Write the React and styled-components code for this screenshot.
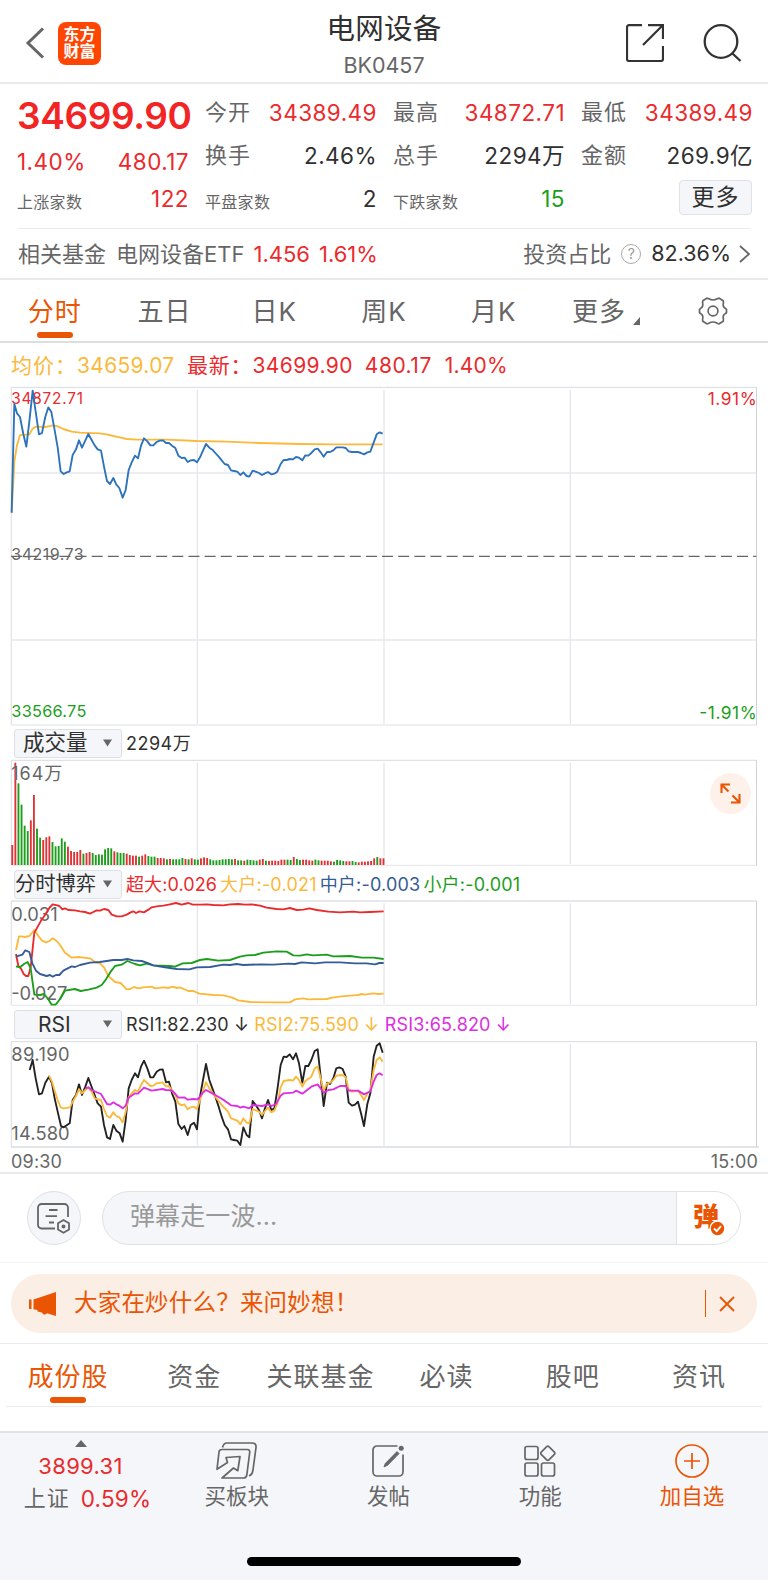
import React from "react";
import styled, { createGlobalStyle } from "styled-components";

const COLORS = {
  red: "#ea2a2c",
  green: "#1c9e1c",
  orange: "#ea5504",
  yellow: "#fbb93c",
  blue: "#2d72bc",
  navy: "#355b98",
  magenta: "#dc2fe0",
  dark: "#303030",
  grey: "#666666",
  line: "#e9eaec",
  panel: "#f5f6f9",
};

const GlobalStyle = createGlobalStyle`
  * {
    box-sizing: border-box;
  }
  body {
    margin: 0;
    background: #fff;
    color: ${COLORS.grey};
    font-family: Inter, "Noto Sans CJK SC", sans-serif;
    font-size: 22px;
    line-height: 1;
  }
  svg {
    display: block;
    flex: none;
  }
`;

const Page = styled.div`
  width: 768px;
  height: 1580px;
  display: flex;
  flex-direction: column;
  overflow: hidden;
`;

const Txt = styled.span`
  color: ${(p) => p.$color || "inherit"};
  font-size: ${(p) => p.$size || 22}px;
  font-weight: ${(p) => p.$weight || 400};
  letter-spacing: ${(p) => p.$gap || 0}px;
  margin-left: ${(p) => p.$ml || 0}px;
  line-height: 1.2;
  white-space: nowrap;
`;

/* ---------- header ---------- */

const Header = styled.header`
  height: 84px;
  display: grid;
  grid-template-columns: 1fr auto 1fr;
  align-items: center;
  border-bottom: 2px solid ${COLORS.line};
`;

const HeaderLeft = styled.div`
  display: flex;
  align-items: center;
  padding: 4px 0 0 25px;
`;

const Logo = styled.div`
  width: 43px;
  height: 43px;
  margin-left: 13px;
  padding-top: 4px;
  border-radius: 8px;
  background: #ff4502;
  color: #fff;
  font-size: 16px;
  font-weight: 700;
  line-height: 17.5px;
  text-align: center;
`;

const TitleBox = styled.div`
  display: flex;
  flex-direction: column;
  align-items: center;
  gap: 7px;
  padding-top: 9px;
`;

const HeaderRight = styled.div`
  display: flex;
  justify-content: flex-end;
  align-items: center;
  gap: 38px;
  padding: 4px 26px 0 0;
`;

/* ---------- quote ---------- */

const Quote = styled.section`
  height: 144px;
  display: grid;
  grid-template-columns: repeat(4, 171px);
  column-gap: 17px;
  padding-left: 17px;
`;

const QuoteCol = styled.div`
  display: grid;
  grid-template-columns: 171px;
  grid-template-rows: ${(p) => (p.$main ? "64px 27px 46px" : "56px 31px 55px")};
`;

const Pair = styled.div`
  display: flex;
  align-items: center;
  justify-content: space-between;
`;

const Num = styled(Txt)`
  font-size: 22.5px;
  letter-spacing: 0.45px;
  margin-right: -1px;
`;

const Small = styled.span`
  font-size: 16px;
  letter-spacing: 0.3px;
  padding-top: 7px;
`;

const MoreButton = styled.button`
  width: 73px;
  height: 35px;
  margin: 0 0 3px auto;
  padding: 0;
  border: 1px solid #dfe1e6;
  border-radius: 4px;
  background: ${COLORS.panel};
  color: ${COLORS.dark};
  font: inherit;
  font-size: 23px;
  letter-spacing: 1px;
`;

const FundRow = styled.section`
  height: 51px;
  display: flex;
  align-items: center;
  padding: 1px 18px 0;
  border-bottom: 2px solid ${COLORS.line};
`;

const Rule = styled.div`
  height: ${(p) => p.$h || 1}px;
  margin: 0 ${(p) => p.$inset || 0}px;
  background: ${(p) => p.$color || COLORS.line};
`;

const Spacer = styled.div`
  flex: 1;
`;

const Help = styled.span`
  width: 20px;
  height: 20px;
  margin: 0 10px;
  border: 1px solid #aaa;
  border-radius: 50%;
  color: #999;
  font-size: 14px;
  line-height: 18px;
  text-align: center;
`;

/* ---------- tabs ---------- */

const Tabs = styled.nav`
  height: ${(p) => p.$height}px;
  display: flex;
  padding: ${(p) => p.$pad || 0};
`;

const Tab = styled.div`
  flex: 1;
  display: flex;
  flex-direction: column;
  align-items: center;
  justify-content: flex-end;
  gap: 7px;
  padding-bottom: 3px;
  color: ${(p) => (p.$active ? COLORS.orange : COLORS.grey)};
  font-size: 26px;
  letter-spacing: 1px;
  white-space: nowrap;

  &::after {
    content: "";
    width: 36px;
    height: 6px;
    border-radius: 3px;
    background: ${(p) => (p.$active ? COLORS.orange : "transparent")};
  }
`;

const MoreTab = styled.span`
  display: flex;
  align-items: flex-end;
  gap: 7px;
  padding-left: 5px;
`;

/* ---------- charts ---------- */

const InfoRow = styled.div`
  height: 42px;
  display: flex;
  align-items: center;
  padding: 3px 0 0 11px;
`;

const Indicator = styled.div`
  height: 34px;
  display: flex;
  align-items: center;
  padding-left: 14px;

  > span {
    padding-top: 2px;
  }
`;

const Select = styled.div`
  width: 108px;
  height: 29px;
  margin-right: 4px;
  display: flex;
  align-items: center;
  justify-content: space-between;
  padding: 0 9px 0 ${(p) => p.$pl}px;
  border: 1px solid #dde0e4;
  border-radius: 3px;
  background: ${COLORS.panel};
  color: ${COLORS.dark};
  font-size: ${(p) => p.$size}px;
  white-space: nowrap;
`;

const Plot = styled.div`
  position: relative;
  height: ${(p) => p.$height}px;

  > svg {
    overflow: visible;
  }
`;

const Expand = styled.div`
  position: absolute;
  top: 13px;
  right: 17px;
  width: 41px;
  height: 41px;
  border-radius: 50%;
  background: #fdf1e9;
  display: flex;
  align-items: center;
  justify-content: center;
`;

const Axis = styled.div`
  height: 26px;
  display: flex;
  align-items: center;
  justify-content: space-between;
  padding: 3px 10px 0 11px;
  border-bottom: 2px solid ${COLORS.line};
`;

/* ---------- comments, banner ---------- */

const CommentRow = styled.section`
  height: 88px;
  display: flex;
  align-items: center;
  gap: 21px;
  padding: 0 27px;
`;

const Round = styled.div`
  width: 54px;
  height: 54px;
  border: 1px solid #dfe1e5;
  border-radius: 50%;
  background: ${COLORS.panel};
  display: flex;
  align-items: center;
  justify-content: center;
`;

const Field = styled.div`
  flex: 1;
  height: 54px;
  display: flex;
  border: 1px solid #dfe1e5;
  border-radius: 27px;
  background: ${COLORS.panel};
  overflow: hidden;
`;

const Placeholder = styled.div`
  flex: 1;
  padding: 12px 0 0 27px;
  color: #999;
  font-size: 25px;
  letter-spacing: 0.1px;
`;

const Bullet = styled.div`
  position: relative;
  width: 64px;
  padding: 12px 0 0 16px;
  border-left: 1px solid #dfe1e5;
  background: #fff;
  color: ${COLORS.orange};
  font-size: 26px;
  font-weight: 900;

  svg {
    position: absolute;
    left: 32px;
    top: 28px;
  }
`;

const Banner = styled.section`
  height: 59px;
  margin: 11px 11px 10px;
  padding: 0 22px 0 17px;
  display: flex;
  align-items: center;
  border-radius: 30px;
  background: #fbeee5;
  color: ${COLORS.orange};
`;

const Bar = styled.i`
  width: 1px;
  height: 27px;
  margin-right: 13px;
  background: ${COLORS.orange};
`;

/* ---------- bottom bar ---------- */

const Footer = styled.footer`
  height: 149px;
  display: flex;
  flex-direction: column;
  border-top: 2px solid #e0e2e5;
  background: ${COLORS.panel};
`;

const FooterItems = styled.div`
  display: flex;
  height: 124px;
`;

const IndexBox = styled.div`
  width: 161px;
  display: flex;
  flex-direction: column;
  align-items: center;
  gap: 6px;
  padding-top: 7px;
`;

const IndexRow = styled.div`
  display: flex;
  padding-left: 14px;
`;

const FooterItem = styled.div`
  flex: 1;
  display: flex;
  flex-direction: column;
  align-items: center;
  padding-top: 9px;
  gap: 5px;
  color: ${(p) => p.$color || COLORS.grey};
`;

const IconBox = styled.div`
  height: 37px;
  display: flex;
  align-items: center;
`;

const HomeBar = styled.div`
  width: 274px;
  height: 9px;
  margin: 0 auto;
  border-radius: 5px;
  background: #000;
`;

/* ---------- chart data, three units per pixel ---------- */

const price =
  "35,698 43,372 51,400 60,411 70,462 79,500 88,425 98,332 107,395 117,463 126,459 136,410 145,382 154,396 163,445 173,502 182,574 191,582 200,577 209,574 218,525 228,508 237,481 246,503 256,481 265,462 275,480 284,496 293,508 303,512 312,560 321,603 330,612 340,594 349,614 358,624 368,653 377,630 386,570 395,547 405,527 414,535 423,497 432,475 442,484 451,496 460,496 470,486 479,482 489,481 498,489 507,489 516,497 526,504 535,527 545,534 554,533 563,546 572,541 582,540 591,547 600,532 609,512 618,492 628,503 637,509 646,519 656,530 665,541 674,552 684,555 693,571 702,573 712,575 721,585 730,577 740,588 748,590 758,572 767,575 777,579 786,585 795,580 804,576 814,583 823,581 832,575 842,552 851,540 860,540 869,537 879,538 888,531 897,533 907,541 916,526 925,527 934,519 944,508 953,506 962,517 971,530 981,516 990,516 1000,511 1009,502 1018,502 1028,502 1037,504 1046,514 1056,516 1074,516 1083,519 1092,523 1102,517 1111,515 1121,488 1130,463 1139,457 1148,461";
const average =
  "35,698 43,545 51,495 60,466 70,464 88,464 98,446 107,440 135,441 145,439 160,436 173,439 190,447 215,455 240,458 300,460 320,463 340,468 360,472 380,477 410,479 500,479 590,483 680,485 780,489 900,492 1000,493 1148,493";

const flow = {
  main: "48,222 55,258 63,266 71,282 78,288 85,288 92,262 97,215 103,158 112,142 122,124 135,105 148,84 158,73 172,76 178,78 187,88 195,85 205,90 225,91 240,94 255,96 270,101 280,96 290,91 300,92 312,87 325,90 335,104 350,109 365,109 380,104 392,97 400,94 408,99 418,94 432,97 445,89 455,82 470,79 490,77 510,73 528,69 545,74 565,69 578,74 600,74 620,73 640,75 670,76 690,73 715,72 735,74 755,73 780,77 800,83 830,87 850,88 870,84 890,90 910,89 928,85 950,90 985,95 1020,97 1060,95 1080,97 1110,96 1151,94",
  big: "48,210 57,169 65,169 75,171 88,168 103,150 115,168 126,182 138,187 148,183 158,175 170,183 180,195 195,218 215,233 235,231 270,235 285,246 300,250 312,262 325,288 345,306 362,309 380,328 390,327 402,321 415,325 430,322 455,320 465,325 490,322 505,324 518,320 530,324 540,322 565,333 580,333 598,341 640,345 670,346 695,352 715,361 750,366 800,367 870,367 885,358 910,355 925,358 980,357 1000,352 1025,349 1060,346 1075,345 1085,342 1095,344 1120,340 1135,342 1151,341",
  middle:
    "48,230 67,224 76,211 88,216 97,250 108,272 120,282 140,288 150,285 158,290 168,285 178,285 190,272 215,259 225,261 240,255 270,248 300,246 340,240 365,240 382,237 400,241 425,243 440,248 460,256 490,261 530,267 568,268 590,262 630,261 670,254 690,255 710,252 730,255 780,253 820,254 865,251 885,252 905,247 945,250 975,247 1020,247 1065,250 1100,250 1125,253 1138,249 1151,249",
  small:
    "48,259 60,262 72,252 83,246 92,265 103,344 120,345 132,342 145,358 155,374 167,374 178,360 195,332 225,327 242,333 265,329 290,323 305,315 318,298 330,278 345,258 365,254 382,243 405,252 420,256 440,251 460,256 510,258 525,260 548,250 575,249 600,240 620,237 655,242 690,240 720,230 740,226 765,225 790,218 830,214 860,215 880,226 900,227 920,223 940,226 980,224 1000,229 1050,228 1085,233 1120,233 1151,237",
};

const rsi = {
  one: "89,570 98,540 107,595 117,643 126,640 136,608 147,590 156,610 164,655 173,695 183,738 191,742 209,730 218,660 228,645 237,613 246,645 256,620 265,594 284,645 293,670 303,680 312,735 321,772 330,777 340,735 349,752 359,760 368,785 377,720 386,625 395,600 405,580 414,592 423,560 432,542 442,565 451,592 460,592 470,575 479,569 488,568 498,607 507,605 516,640 526,665 535,732 545,747 553,738 563,765 572,735 582,728 591,748 600,650 609,600 618,552 628,600 637,625 646,650 656,680 665,710 674,735 684,748 693,778 702,780 712,782 721,795 730,742 740,765 748,772 758,663 767,675 777,690 786,715 795,685 804,660 814,690 823,685 832,630 842,555 851,530 860,531 869,523 879,538 888,520 897,550 907,608 916,558 925,558 934,540 944,513 953,508 962,590 971,678 981,608 990,612 1000,595 1009,565 1018,562 1028,567 1037,590 1046,668 1056,677 1065,674 1074,665 1083,700 1092,738 1102,672 1111,640 1121,530 1130,497 1139,490 1148,518",
  two: "147,587 156,605 164,632 173,660 182,682 191,685 210,682 218,665 228,648 237,628 246,640 256,630 265,622 275,635 284,655 303,660 312,687 321,708 330,713 340,697 349,708 358,712 368,727 377,695 386,652 395,640 405,630 414,635 423,615 432,600 442,609 451,618 460,617 470,610 488,607 498,619 507,618 516,632 526,645 535,670 545,676 553,673 563,688 572,682 582,680 591,687 600,660 609,632 618,607 628,625 646,650 665,675 684,695 693,715 712,722 721,733 730,715 740,728 748,730 758,687 777,695 786,705 795,693 804,683 814,697 823,692 832,670 842,622 851,603 869,600 879,602 888,590 897,600 907,620 916,603 934,590 944,565 953,560 962,595 971,632 981,610 990,608 1000,600 1009,587 1028,585 1037,592 1046,628 1056,635 1074,632 1083,645 1092,660 1102,640 1111,632 1121,570 1130,540 1139,532 1148,545",
  three:
    "256,625 265,622 275,630 303,642 312,657 321,672 330,674 340,667 349,673 358,677 368,685 377,677 386,653 405,640 414,641 432,623 455,632 488,627 498,630 516,631 526,642 535,653 553,652 563,659 580,657 593,658 609,638 618,630 637,640 656,651 674,662 693,676 712,678 721,683 730,680 748,685 758,675 786,678 804,673 814,678 828,672 842,647 851,640 879,638 888,632 907,641 934,620 953,613 971,638 985,630 1000,628 1020,618 1037,618 1046,632 1074,632 1092,643 1111,634 1121,605 1130,585 1139,580 1148,586",
};

const volumes = [
  60, 307, 245, 181, 118, 102, 134, 210, 109, 82, 75, 83, 86, 69, 56, 57, 80,
  70, 55, 42, 39, 39, 45, 34, 36, 39, 36, 30, 32, 31, 47, 51, 50, 41, 38, 36,
  36, 34, 30, 28, 28, 25, 28, 32, 27, 25, 25, 21, 21, 20, 17, 18, 17, 17, 17,
  21, 18, 17, 20, 17, 16, 20, 23, 21, 17, 14, 14, 15, 17, 17, 18, 17, 18, 14,
  14, 13, 16, 15, 14, 13, 16, 18, 13, 12, 13, 13, 12, 16, 16, 16, 15, 24, 18,
  15, 16, 16, 14, 13, 16, 14, 13, 13, 13, 11, 10, 15, 14, 12, 11, 11, 12, 9, 8,
  10, 10, 11, 12, 20, 24, 20, 20,
];
const volumeColors =
  "rrggggrrggrrrggggg" +
  "rrrrrgrrggggggg" +
  "rgggrrrrgrrgggrrrgrggggrgrggrrr" +
  "ggggggggrggrggggrrgrrrrrrggrggrrrrggrrrrggggrrggrrrrrrg";

/* ---------- chart parts ---------- */

const Grid = ({ top, bottom, base }) => (
  <g fill="none" strokeWidth="4">
    <path
      d={`M592 ${top + 7}V${bottom - 4}M1152 ${top + 7}V${bottom - 4}M1711 ${top + 7}V${bottom - 4}`}
      stroke="#e6e7ed"
    />
    <path d={`M34 ${top}V${bottom}`} stroke="#e2e4e8" />
    <path d={`M33 ${top}H2271`} stroke="#dfe1e5" />
    <path d={`M33 ${bottom}H${base ? 2277 : 2271}`} stroke={base || "#e9eaee"} />
    <path d={`M2269.500 ${top}V${bottom}`} stroke="#d0d5db" strokeWidth="3" />
  </g>
);

const Line = ({ points, color, width = 5.6 }) => (
  <polyline
    points={points}
    fill="none"
    stroke={color}
    strokeWidth={width}
    strokeLinejoin="round"
  />
);

const Label = ({ x = 34, y, size, color = COLORS.grey, width, end, children }) => (
  <text
    x={x}
    y={y}
    fill={color}
    fontSize={size}
    textLength={width}
    textAnchor={end ? "end" : "start"}
  >
    {children}
  </text>
);

const PriceChart = () => (
  <Plot $height={341}>
    <svg width="768" height="341" viewBox="0 315 2304 1023">
      <Grid top={322} bottom={1335} />
      <path d="M35 579H2269M35 1080H2269" stroke="#e6e7ed" strokeWidth="5" />
      <path
        d="M33 829H2269"
        stroke={COLORS.grey}
        strokeWidth="4"
        strokeDasharray="33 15.4"
      />
      <Label y={371} size={46} color={COLORS.red} width={215}>34872.71</Label>
      <Label x={2270} y={376} size={52} color={COLORS.red} width={147} end>1.91%</Label>
      <Label y={841} size={48} width={217}>34219.73</Label>
      <Label y={1311} size={49} color={COLORS.green} width={225}>33566.75</Label>
      <Label x={2270} y={1316} size={52} color={COLORS.green} width={172} end>-1.91%</Label>
      <Line points={average} color={COLORS.yellow} />
      <Line points={price} color={COLORS.blue} />
    </svg>
  </Plot>
);

const VolumeChart = () => (
  <Plot $height={107}>
    <svg width="768" height="107" viewBox="0 240 2304 321">
      <Grid top={241} bottom={556} />
      {volumes.map((v, i) => (
        <rect
          key={i}
          x={34 + i * 9.28}
          y={555 - v}
          width="5.6"
          height={v}
          fill={volumeColors[i] === "g" ? COLORS.green : "#e03236"}
        />
      ))}
      <Label y={301} size={54} width={153}>164万</Label>
    </svg>
    <Expand>
      <svg width="21" height="21" viewBox="0 0 21 21" fill="none" stroke={COLORS.orange} strokeWidth="2.100">
        <path d="M1.500 10V1.500H10M1.500 1.500l7 7M12.500 12.500l7 7M19.500 11v8.500H11" />
      </svg>
    </Expand>
  </Plot>
);

const FlowChart = () => (
  <Plot $height={106}>
    <svg width="768" height="106" viewBox="0 63 2304 318">
      <Grid top={63} bottom={376} />
      <Label y={122} size={55} width={139}>0.031</Label>
      <Label y={359} size={55} width={168}>-0.027</Label>
      <Line points={flow.big} color={COLORS.yellow} />
      <Line points={flow.main} color={COLORS.red} />
      <Line points={flow.small} color={COLORS.green} />
      <Line points={flow.middle} color={COLORS.navy} />
    </svg>
  </Plot>
);

const RsiChart = () => (
  <Plot $height={107}>
    <svg width="768" height="107" viewBox="0 483 2304 321">
      <Grid top={485} bottom={801} base="#d9dcdf" />
      <Label y={544} size={55} width={175}>89.190</Label>
      <Label y={780} size={55} width={175}>14.580</Label>
      <Line points={rsi.one} color="#222" />
      <Line points={rsi.two} color={COLORS.yellow} />
      <Line points={rsi.three} color={COLORS.magenta} />
    </svg>
  </Plot>
);

const Triangle = () => (
  <svg width="9" height="8" viewBox="0 0 9 8">
    <path d="M0 .5h9L4.500 7.500z" fill="#666" />
  </svg>
);

/* ---------- icons ---------- */

const BackIcon = () => (
  <svg width="20" height="32" viewBox="0 0 20 32" fill="none" stroke="#666" strokeWidth="3">
    <path d="M18 1.500L3 16l15 14.500" />
  </svg>
);

const ShareIcon = () => (
  <svg width="38" height="38" viewBox="0 0 38 38" fill="none" stroke="#333" strokeWidth="2.200">
    <path d="M16 1.200H3a2 2 0 0 0-2 2V35a2 2 0 0 0 2 2h32a2 2 0 0 0 2-2V22M22 1.200h15V15M36.500 1.500L17 21" />
  </svg>
);

const SearchIcon = () => (
  <svg width="40" height="40" viewBox="0 0 40 40" fill="none" stroke="#333" strokeWidth="2.300">
    <circle cx="19" cy="18.500" r="16.300" />
    <path d="M30.500 30.500l8 7.500" />
  </svg>
);

const GearIcon = () => (
  <svg width="30" height="28" viewBox="0 0 30 28" fill="none" stroke="#666" strokeWidth="1.700">
    <path d="M8.800 1.200C10.500 1.200 11.500 3 15 3s4.500-1.800 6.200-1.800l4 2.500C26 6 24.500 7.500 25.500 9.500c.8 1.600 2.500 2 3 3v3c-.5 1-2.200 1.400-3 3-1 2 .5 3.500-.3 5.800l-4 2.500C19.500 26.800 18.500 25 15 25s-4.500 1.800-6.200 1.800l-4-2.500C4 22 5.500 20.500 4.500 18.500c-.8-1.600-2.500-2-3-3v-3c.5-1 2.200-1.400 3-3 1-2-.5-3.500.3-5.800z" strokeLinejoin="round" />
    <circle cx="15" cy="14" r="4.900" />
  </svg>
);

const NoteIcon = () => (
  <svg width="34" height="31" viewBox="0 0 34 31" fill="none" stroke="#666" strokeWidth="1.800">
    <path d="M18 25.500H4.500a3.500 3.500 0 0 1-3.500-3.500V4.500A3.500 3.500 0 0 1 4.500 1h23A3.500 3.500 0 0 1 31 4.500V14M12 7h8.500M8.500 13.200h11.500M12 19.500h5" />
    <path d="M26.500 17l5.500 3.200v6.400l-5.500 3.200-5.500-3.200v-6.400z" />
    <circle cx="26.500" cy="23.400" r="1.100" fill="#666" />
  </svg>
);

const CheckBadge = () => (
  <svg width="17" height="17" viewBox="0 0 17 17">
    <circle cx="8.500" cy="8.500" r="7.400" fill={COLORS.orange} stroke="#fff" strokeWidth="1.400" />
    <path d="M5 8.500l2.700 2.700L12 6.200" fill="none" stroke="#fff" strokeWidth="1.800" />
  </svg>
);

const HornIcon = () => (
  <svg width="28" height="26" viewBox="0 0 28 26" fill={COLORS.orange}>
    <path d="M1 8.500h2.500v9.500H1zM5.500 8.500L28 1v24l-9-2.800c-1.500 2-4 1.600-5-.8l-4.500-.8v-1.600l-4-.8z" />
  </svg>
);

const BuyIcon = () => (
  <svg width="41" height="37" viewBox="0 0 41 37" fill="none" stroke="#666" strokeWidth="1.700" strokeLinejoin="round">
    <path d="M6.500 5.500Q7.500 1 11 1H36q4.500 0 4 4.500L37 28q-.8 5-4 5.800" />
    <path d="M1 27.300L3 10Q3.300 7.500 6 7.500H31.500Q34 7.500 33.700 10.500L30.800 33Q30.300 36 27.500 36H6L17.500 26l4.300 2.700L24 14.500 10 15.500l1.500 5z" />
  </svg>
);

const PostIcon = () => (
  <svg width="33" height="32" viewBox="0 0 33 32" fill="none" stroke="#666" strokeWidth="1.700">
    <path d="M25.500 1H5a4 4 0 0 0-4 4v22a4 4 0 0 0 4 4h22a4 4 0 0 0 4-4V9.500" />
    <path d="M12 21.800l1.500-3.500L25 6.600l2 2L15.500 20.300z" fill="#666" strokeWidth="1" strokeLinejoin="round" />
    <circle cx="29.200" cy="3.200" r="2.500" fill="#666" stroke="none" />
  </svg>
);

const AppsIcon = () => (
  <svg width="32" height="32" viewBox="0 0 32 32" fill="none" stroke="#666" strokeWidth="1.700">
    <rect x="1" y="1.500" width="13" height="13" rx="2" />
    <rect x="1" y="18" width="13" height="13" rx="2" />
    <rect x="17.500" y="18" width="13" height="13" rx="2" />
    <path d="M22.700 1.600a1.500 1.500 0 0 1 2.200 0l5.500 5.500a1.500 1.500 0 0 1 0 2.200l-5.500 5.500a1.500 1.500 0 0 1-2.200 0l-5.500-5.500a1.500 1.500 0 0 1 0-2.200z" />
  </svg>
);

const AddIcon = () => (
  <svg width="34" height="34" viewBox="0 0 34 34" fill="none" stroke={COLORS.orange} strokeWidth="1.700">
    <circle cx="17" cy="17" r="16" />
    <path d="M17 9v16M9 17h16" />
  </svg>
);

const stats = [
  [
    { name: "今开", value: "34389.49", color: COLORS.red },
    { name: "换手", value: "2.46%" },
    { name: "平盘家数", value: "2" },
  ],
  [
    { name: "最高", value: "34872.71", color: COLORS.red },
    { name: "总手", value: "2294万" },
    { name: "下跌家数", value: "15", color: COLORS.green },
  ],
  [
    { name: "最低", value: "34389.49", color: COLORS.red },
    { name: "金额", value: "269.9亿" },
  ],
];

const periods = ["分时", "五日", "日K", "周K", "月K"];
const sections = ["成份股", "资金", "关联基金", "必读", "股吧", "资讯"];
const actions = [
  { name: "买板块", icon: <BuyIcon /> },
  { name: "发帖", icon: <PostIcon /> },
  { name: "功能", icon: <AppsIcon /> },
  { name: "加自选", icon: <AddIcon />, color: COLORS.orange },
];

const App = () => (
  <Page>
    <GlobalStyle />
    <Header>
      <HeaderLeft>
        <BackIcon />
        <Logo>
          东方
          <br />
          财富
        </Logo>
      </HeaderLeft>
      <TitleBox>
        <Txt $size={28.5} $color={COLORS.dark} $gap={0.2}>电网设备</Txt>
        <Txt $size={21.5}>BK0457</Txt>
      </TitleBox>
      <HeaderRight>
        <ShareIcon />
        <SearchIcon />
      </HeaderRight>
    </Header>

    <Quote>
      <QuoteCol $main>
        <Pair>
          <Txt $size={37} $weight={600} $gap={-0.4} $color="#f22424">34699.90</Txt>
        </Pair>
        <Pair>
          <Num $color={COLORS.red}>1.40%</Num>
          <Num $color={COLORS.red}>480.17</Num>
        </Pair>
        <Pair>
          <Small>上涨家数</Small>
          <Num $color={COLORS.red}>122</Num>
        </Pair>
      </QuoteCol>
      {stats.map((col, i) => (
        <QuoteCol key={i}>
          {col.map((s) => (
            <Pair key={s.name}>
              {s.name.length > 2 ? <Small>{s.name}</Small> : <Txt $gap={1}>{s.name}</Txt>}
              <Num $color={s.color || COLORS.dark}>{s.value}</Num>
            </Pair>
          ))}
          {i === 2 && (
            <Pair>
              <MoreButton>更多</MoreButton>
            </Pair>
          )}
        </QuoteCol>
      ))}
    </Quote>
    <Rule $inset={18} />
    <FundRow>
      <Txt>相关基金</Txt>
      <Txt $ml={10}>电网设备ETF</Txt>
      <Txt $ml={9} $color={COLORS.red}>1.456</Txt>
      <Txt $ml={9} $color={COLORS.red}>1.61%</Txt>
      <Spacer />
      <Txt>投资占比</Txt>
      <Help>?</Help>
      <Txt $size={21.5} $color={COLORS.dark}>82.36%</Txt>
      <svg width="19" height="18" viewBox="0 0 19 18" fill="none" stroke="#666" strokeWidth="1.800">
        <path d="M9 1l9 8-9 8" />
      </svg>
    </FundRow>

    <Tabs $height={61}>
      {periods.map((name, i) => (
        <Tab key={name} $active={i === 0}>{name}</Tab>
      ))}
      <Tab>
        <MoreTab>
          更多
          <svg width="7" height="8" viewBox="0 0 7 8">
            <path d="M7 0v8H0z" fill="#666" />
          </svg>
        </MoreTab>
      </Tab>
      <Tab>
        <GearIcon />
      </Tab>
    </Tabs>
    <Rule $h={2} $color="#dcdee0" />

    <InfoRow>
      <Txt $size={21} $gap={1} $color={COLORS.yellow}>均价：</Txt>
      <Txt $size={21} $gap={0.3} $color={COLORS.yellow}>34659.07</Txt>
      <Txt $size={21} $gap={0.8} $color={COLORS.red} $ml={12.5}>最新：</Txt>
      <Txt $size={21} $gap={0.4} $color={COLORS.red}>34699.90</Txt>
      <Txt $size={21} $gap={0.5} $color={COLORS.red} $ml={12}>480.17</Txt>
      <Txt $size={21} $gap={0.2} $color={COLORS.red} $ml={13}>1.40%</Txt>
    </InfoRow>
    <PriceChart />
    <Indicator>
      <Select $size={21.5} $pl={8}>
        成交量
        <Triangle />
      </Select>
      <Txt $size={18} $gap={0.5} $color={COLORS.dark}>2294万</Txt>
    </Indicator>
    <VolumeChart />
    <Indicator>
      <Select $size={20.3} $pl={0}>
        分时博弈
        <Triangle />
      </Select>
      <Txt $size={18} $gap={0.1} $color={COLORS.red}>超大:0.026</Txt>
      <Txt $size={18} $gap={0.2} $color={COLORS.yellow} $ml={3}>大户:-0.021</Txt>
      <Txt $size={18} $gap={0.2} $color={COLORS.navy} $ml={3}>中户:-0.003</Txt>
      <Txt $size={18} $gap={0.2} $color={COLORS.green} $ml={3}>小户:-0.001</Txt>
    </Indicator>
    <FlowChart />
    <Indicator>
      <Select $size={21} $pl={23}>
        RSI
        <Triangle />
      </Select>
      <Txt $size={18} $gap={0.15} $color={COLORS.dark}>RSI1:82.230 ↓</Txt>
      <Txt $size={18} $gap={0.15} $color={COLORS.yellow} $ml={5}>RSI2:75.590 ↓</Txt>
      <Txt $size={18} $gap={0.15} $color={COLORS.magenta} $ml={5.5}>RSI3:65.820 ↓</Txt>
    </Indicator>
    <RsiChart />
    <Axis>
      <Txt $size={18} $gap={0.2}>09:30</Txt>
      <Txt $size={18} $gap={0.2}>15:00</Txt>
    </Axis>

    <CommentRow>
      <Round>
        <NoteIcon />
      </Round>
      <Field>
        <Placeholder>弹幕走一波...</Placeholder>
        <Bullet>
          弹
          <CheckBadge />
        </Bullet>
      </Field>
    </CommentRow>
    <Rule $color="#f2f3f5" />

    <Banner>
      <HornIcon />
      <Txt $size={23.5} $gap={0.2} $ml={18}>大家在炒什么？来问妙想！</Txt>
      <Spacer />
      <Bar />
      <svg width="16" height="16" viewBox="0 0 16 16" fill="none" stroke={COLORS.orange} strokeWidth="1.800">
        <path d="M1 1l14 14M15 1L1 15" />
      </svg>
    </Banner>
    <Rule />

    <Tabs $height={62} $pad="0 6px 0 5px">
      {sections.map((name, i) => (
        <Tab key={name} $active={i === 0}>{name}</Tab>
      ))}
    </Tabs>
    <Rule $inset={6} />
    <Spacer />

    <Footer>
      <FooterItems>
        <IndexBox>
          <svg width="12" height="7" viewBox="0 0 12 7">
            <path d="M0 7l6-7 6 7z" fill="#666" />
          </svg>
          <Txt $gap={0.3} $color={COLORS.red}>3899.31</Txt>
          <IndexRow>
            <Txt $gap={1}>上证</Txt>
            <Txt $ml={11} $size={22.5} $gap={0.2} $color={COLORS.red}>0.59%</Txt>
          </IndexRow>
        </IndexBox>
        {actions.map((a) => (
          <FooterItem key={a.name} $color={a.color}>
            <IconBox>{a.icon}</IconBox>
            <Txt $size={21.5}>{a.name}</Txt>
          </FooterItem>
        ))}
      </FooterItems>
      <HomeBar />
    </Footer>
  </Page>
);

export default App;
